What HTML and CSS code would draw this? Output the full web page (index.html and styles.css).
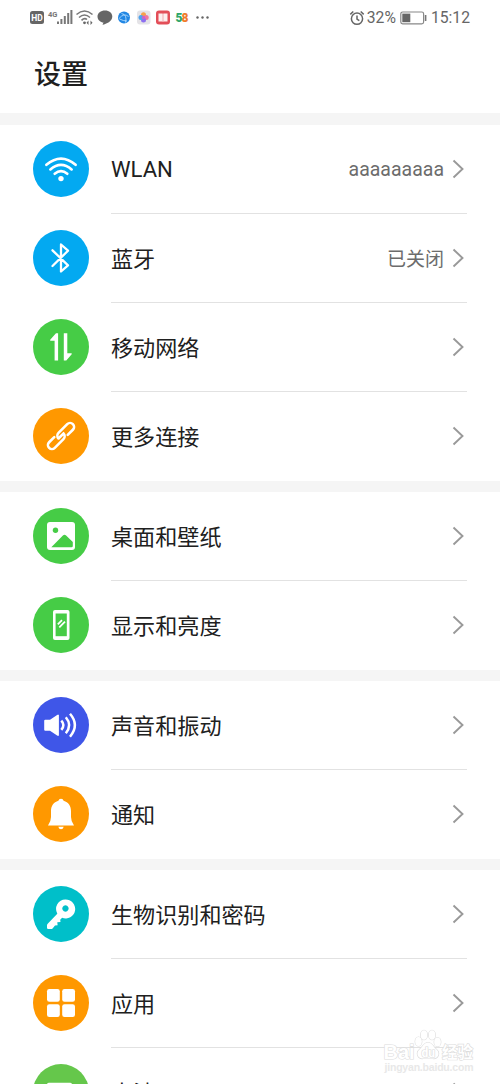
FILE: index.html
```html
<!DOCTYPE html>
<html lang="zh-CN">
<head>
  <meta charset="UTF-8" />
  <meta name="viewport" content="width=device-width, initial-scale=1.0" />
  <title>设置</title>
  <link rel="stylesheet" href="styles.css">
</head>
<body>

  <!-- Shared chevron -->
  <svg class="defs">
    <symbol id="chevron" viewBox="0 0 12 20">
      <path d="M1.500 1.500 L10.500 10 L1.500 18.500" fill="none" stroke="#999" stroke-width="1.900" />
    </symbol>
  </svg>

  <div class="screen">

    <!-- Status bar -->
    <div class="statusbar">
      <svg class="status-icons" viewBox="0 0 190 24" width="190" height="24">
        <rect x="2" y="5" width="14" height="13" rx="2.500" fill="#666" />
        <text x="9" y="15" class="hd">HD</text>
        <text x="20" y="10.500" class="net">4G</text>
        <g fill="#777">
          <rect x="29" y="15.500" width="2" height="2.500" />
          <rect x="32.400" y="13" width="2" height="5" />
          <rect x="35.800" y="10" width="2" height="8" />
          <rect x="39.200" y="7" width="2" height="11" />
          <rect x="42.400" y="4" width="2" height="14" />
        </g>
        <g fill="none" stroke="#777" stroke-width="1.600">
          <path d="M48.500 8.500 Q56.500 1.500 64.500 8.500" />
          <path d="M51 11.500 Q56.500 6.500 62 11.500" />
          <path d="M53.500 14.300 Q56.500 11.500 59 13.500" />
        </g>
        <circle cx="56.500" cy="16.800" r="1.400" fill="#666" />
        <path d="M60.500 14.500 l-2 2.200 2 2.200z M62.500 14.500 l2 2.200 -2 2.200z" fill="#666" />
        <path d="M77 4.500 c-4.300 0-7.500 2.600-7.500 6 0 3.600 3.200 6 6 6 l-1 2.200 c4-.5 9.800-3.500 9.800-8.200 0-3.400-3-6-7.300-6z" fill="#666" />
        <circle cx="96" cy="11.500" r="6" fill="#2187e4" />
        <path d="M91 12.500 q5-6 9.500-2 M93.500 7.500 q6 1 4 9 M91.500 13 q4 2 7.500 2" fill="none" stroke="#bfe2ff" stroke-width=".8" />
        <rect x="109" y="4.500" width="13.500" height="14" rx="3" fill="#e4e3e7" />
        <circle cx="115.500" cy="8.800" r="2.500" fill="#f5a04b" />
        <circle cx="118.200" cy="11.500" r="2.500" fill="#ef77a0" />
        <circle cx="115.500" cy="14" r="2.500" fill="#8d6ff0" />
        <circle cx="113" cy="11.500" r="2.500" fill="#4fa3ec" />
        <circle cx="115.500" cy="11.500" r="1.700" fill="#c862cd" />
        <rect x="128" y="4.500" width="14" height="14" rx="3" fill="#e34e58" />
        <path d="M130.500 7.500 h4 l.5 .6 .5-.6 h4 v8 h-4 l-.5 .6 -.5-.6 h-4z" fill="#fdeeee" />
        <path d="M135 8 V16" stroke="#ee9a9f" stroke-width=".8" />
        <text x="147.500" y="15.800" class="five">5</text>
        <text x="153.500" y="15.800" class="eight">8</text>
        <circle cx="169.500" cy="11.500" r="1.200" fill="#666" />
        <circle cx="174.500" cy="11.500" r="1.200" fill="#666" />
        <circle cx="179.500" cy="11.500" r="1.200" fill="#666" />
      </svg>
      <div class="status-right">
        <svg class="alarm" viewBox="0 0 16 16" width="16" height="16" fill="none" stroke="#666" stroke-width="1.500">
          <circle cx="8" cy="8.700" r="5.600" />
          <path d="M8 5.500 V9 L10.300 10.600 M1.300 4.400 L4.300 1.500 M14.700 4.400 L11.700 1.500" />
        </svg>
        <span class="battery-text">32%</span>
        <svg class="battery" viewBox="0 0 27 14" width="27" height="14">
          <rect x=".8" y="1" width="22.800" height="11.800" rx="1.800" fill="none" stroke="#888" stroke-width="1.200" />
          <rect x="2.300" y="2.600" width="8" height="8.600" fill="#666" />
          <rect x="24.800" y="4" width="1.600" height="6" fill="#777" />
        </svg>
        <span class="clock">15:12</span>
      </div>
    </div>

    <h1 class="title">设置</h1>

    <!-- Connections -->
    <div class="group">
      <div class="row">
        <svg class="icon blue" viewBox="0 0 56 56" fill="none" stroke="#fff" stroke-width="2.700" stroke-linecap="round">
          <path d="M13.400 23.800 Q28 11.300 42.600 23.800" />
          <path d="M17.400 28.400 Q28 19.300 38.600 28.400" />
          <path d="M21.700 32.700 Q28 27.500 34.300 32.700" />
          <circle cx="28" cy="37.600" r="2.700" fill="#fff" stroke="none" />
        </svg>
        <div class="content">
          <span class="label latin">WLAN</span>
          <span class="value latin">aaaaaaaaa</span>
          <svg class="chevron"><use href="#chevron" /></svg>
        </div>
      </div>
      <div class="row">
        <svg class="icon blue" viewBox="0 0 56 56" fill="none" stroke="#fff" stroke-width="2.300" stroke-linecap="round" stroke-linejoin="round">
          <path d="M19.500 20.300 L35 35.300 L28 41.500 V14.500 L35 20.700 L19.500 36" />
        </svg>
        <div class="content">
          <span class="label">蓝牙</span>
          <span class="value">已关闭</span>
          <svg class="chevron"><use href="#chevron" /></svg>
        </div>
      </div>
      <div class="row">
        <svg class="icon green" viewBox="0 0 56 56" fill="#fff">
          <path d="M21.600 41.500 V21.800 H17.200 V20.800 L23 14.300 H25.100 V41.500z" />
          <path d="M30.800 14.300 H34.300 V34.300 H38.700 V35.300 L33.300 41.500 H30.800z" />
        </svg>
        <div class="content">
          <span class="label">移动网络</span>
          <svg class="chevron"><use href="#chevron" /></svg>
        </div>
      </div>
      <div class="row">
        <svg class="icon orange" viewBox="0 0 56 56" fill="none" stroke="#fff" stroke-width="2.600" stroke-linecap="round">
          <g transform="rotate(-45 28 28)">
            <path d="M22.500 24 H15.200 a4 4 0 0 0 0 8 H27.500 a4 4 0 0 0 4-4 H25.500" />
            <path d="M33.500 32 H40.800 a4 4 0 0 0 0-8 H28.500 a4 4 0 0 0 -4 4" />
          </g>
        </svg>
        <div class="content">
          <span class="label">更多连接</span>
          <svg class="chevron"><use href="#chevron" /></svg>
        </div>
      </div>
    </div>

    <!-- Display -->
    <div class="group">
      <div class="row">
        <svg class="icon green" viewBox="0 0 56 56">
          <rect x="14" y="14" width="28" height="28" rx="3" fill="#fff" />
          <circle cx="22.500" cy="22.300" r="2.700" fill="#46cc46" />
          <path d="M18.300 39.300 L29.900 27.600 Q31.500 26 33.100 27.600 L39.800 34 V38 Q39.800 39.300 38.500 39.300z" fill="#46cc46" />
        </svg>
        <div class="content">
          <span class="label">桌面和壁纸</span>
          <svg class="chevron"><use href="#chevron" /></svg>
        </div>
      </div>
      <div class="row">
        <svg class="icon green" viewBox="0 0 56 56">
          <rect x="20" y="13" width="16.500" height="30" rx="2" fill="#fff" />
          <rect x="22.600" y="16.500" width="11.200" height="22.700" fill="#46cc46" />
          <path d="M24.800 27.300 L29 23.100 M26.300 30.300 L32 24.600" stroke="#fff" stroke-width="1.800" />
        </svg>
        <div class="content">
          <span class="label">显示和亮度</span>
          <svg class="chevron"><use href="#chevron" /></svg>
        </div>
      </div>
    </div>

    <!-- Sound -->
    <div class="group">
      <div class="row">
        <svg class="icon indigo" viewBox="0 0 56 56" fill="none" stroke="#fff" stroke-width="2.500">
          <path d="M12.300 22.800 H17 L24.500 17.700 H25.900 V38.700 H24.500 L17 33.700 H12.300 Q11.200 33.700 11.200 32.700 V23.800 Q11.200 22.800 12.300 22.800z" fill="#fff" stroke="none" />
          <path d="M28.300 23.700 Q32.500 28.200 28.300 32.800" />
          <path d="M32.800 20.300 Q39.500 28.200 32.800 36.200" />
          <path d="M37 16.800 Q46.800 28.200 37 39.700" />
        </svg>
        <div class="content">
          <span class="label">声音和振动</span>
          <svg class="chevron"><use href="#chevron" /></svg>
        </div>
      </div>
      <div class="row">
        <svg class="icon orange" viewBox="0 0 56 56" fill="#fff">
          <path d="M28 12.700 a2.600 2.600 0 0 1 2.600 2.100 C35.500 16.200 38 20 38 25 V31 Q38 35.500 41 39.500 H15 Q18 35.500 18 31 V25 C18 20 20.500 16.200 25.400 14.800 A2.600 2.600 0 0 1 28 12.700z" />
          <path d="M25.300 40.700 H30.700 Q30 43.200 28 43.200 T25.300 40.700z" />
        </svg>
        <div class="content">
          <span class="label">通知</span>
          <svg class="chevron"><use href="#chevron" /></svg>
        </div>
      </div>
    </div>

    <!-- Security and apps -->
    <div class="group">
      <div class="row">
        <svg class="icon teal" viewBox="0 0 56 56" fill="#fff">
          <path fill-rule="evenodd" d="M32.300 13.500 a9.500 9.500 0 1 1 -3.200 18.300 L27.200 33.700 L27.500 36 L24.300 36.300 L24.600 39.300 L22 39.500 L19.600 42.400 Q19 43 18 43 H15.200 Q14 43 14 41.800 V39.500 Q14 38.500 14.700 37.800 L24.300 27.700 A9.500 9.500 0 0 1 32.300 13.500z M32.400 19.300 a3.200 3.200 0 1 0 .1 0z" />
        </svg>
        <div class="content">
          <span class="label">生物识别和密码</span>
          <svg class="chevron"><use href="#chevron" /></svg>
        </div>
      </div>
      <div class="row">
        <svg class="icon orange" viewBox="0 0 56 56" fill="#fff">
          <rect x="14" y="14" width="12.800" height="12.800" rx="2.300" />
          <rect x="29.200" y="14" width="12.800" height="12.800" rx="2.300" />
          <rect x="14" y="29.200" width="12.800" height="12.800" rx="2.300" />
          <rect x="29.200" y="29.200" width="12.800" height="12.800" rx="2.300" />
        </svg>
        <div class="content">
          <span class="label">应用</span>
          <svg class="chevron"><use href="#chevron" /></svg>
        </div>
      </div>
      <div class="row">
        <svg class="icon leaf" viewBox="0 0 56 56" fill="#fff">
          <rect x="14" y="18.700" width="25" height="18.600" rx="2" />
          <rect x="40" y="24" width="2.500" height="8" rx="1" />
        </svg>
        <div class="content">
          <span class="label">电池</span>
          <svg class="chevron"><use href="#chevron" /></svg>
        </div>
      </div>
    </div>

    <!-- Watermark over the list -->
    <svg class="watermark" viewBox="0 0 100 50" width="100" height="50">
      <g class="wm-outline">
        <text x="2.500" y="31.500" class="wm-brand">Bai</text>
        <ellipse cx="37.500" cy="14.500" rx="3.300" ry="4.500" />
        <ellipse cx="43" cy="8" rx="3.300" ry="4.700" />
        <ellipse cx="51" cy="8" rx="3.300" ry="4.700" />
        <ellipse cx="56.500" cy="15" rx="3.300" ry="4.500" />
        <path d="M47 15.500 c-4 0-5 4-8 6.500 -5 4-2 10 3 9.500 h10 c5 .5 8-5.500 3-9.500 -3-2.500-4-6.500-8-6.500z" />
        <text x="40.500" y="29.500" class="wm-du">du</text>
        <text x="61" y="31" class="wm-cn">经验</text>
      </g>
      <text x="3.500" y="43.500" class="wm-url" textLength="89">jingyan.baidu.com</text>
    </svg>

  </div>

</body>
</html>
```
FILE: styles.css
```css
body {
  font-family: Roboto, "Noto Sans CJK SC", sans-serif;
  background-color: #fff;
  margin: 0;
  padding: 0;
}

.defs {
  display: none;
}

.screen {
  position: relative;
  width: 500px;
  height: 1084px;
  overflow: hidden;
}

/* Status bar */
.statusbar {
  display: flex;
  justify-content: space-between;
  align-items: center;
  height: 34px;
  padding: 0 30px 0 28px;
  color: #666;
}

.status-icons {
  margin-top: 2px;
}

.hd {
  font-size: 8.5px;
  font-weight: bold;
  fill: #fff;
  text-anchor: middle;
}

.net {
  font-size: 7.5px;
  font-weight: bold;
  fill: #777;
}

.five,
.eight {
  font-size: 12px;
  font-weight: 900;
}

.five {
  fill: #2fa66a;
}

.eight {
  fill: #ef7b2d;
}

.status-right {
  display: flex;
  align-items: center;
  font-size: 15.7px;
  line-height: 20px;
  padding-top: 2px;
}

.battery-text {
  margin-left: 2px;
}

.battery {
  margin: 0 4px 0 4px;
}

.title {
  height: 79px;
  margin: 0;
  padding-left: 34px;
  box-sizing: border-box;
  font-size: 27px;
  font-weight: 500;
  line-height: 83px;
  color: #1f1f1f;
}

/* Setting groups */
.group {
  border-top: 11px solid #f5f5f5;
}

.title + .group {
  border-top-width: 12px;
}

.row {
  display: flex;
  height: 89px;
  padding: 0 33px;
}

.icon {
  width: 56px;
  height: 56px;
  flex: none;
  margin: 16px 22px 0 0;
  border-radius: 50%;
}

.blue {
  background-color: #03a9f1;
}

.green {
  background-color: #46cc46;
}

.orange {
  background-color: #ff9800;
}

.indigo {
  background-color: #3f56e8;
}

.teal {
  background-color: #00bfc9;
}

.leaf {
  background-color: #65c74b;
}

.content {
  display: flex;
  flex: 1;
  align-items: center;
  border-bottom: 1px solid #e2e2e2;
}

.row:last-child .content {
  border-bottom-color: transparent;
}

.label {
  flex: 1;
  padding-bottom: 2px;
  font-size: 22.1px;
  color: #202020;
}

.value {
  margin-right: 8px;
  padding-bottom: 1px;
  font-size: 19px;
  color: #6c6c6c;
}

.latin {
  padding-bottom: 0;
}

.value.latin {
  font-size: 19.5px;
}

.chevron {
  width: 12px;
  height: 20px;
  margin-right: 3px;
}

/* Watermark */
.watermark {
  position: absolute;
  left: 381px;
  top: 1027px;
}

.wm-outline {
  fill: #fff;
  stroke: #dcdcdc;
  stroke-width: 1.2px;
  paint-order: stroke;
}

.wm-brand {
  font-family: "Liberation Sans", sans-serif;
  font-size: 20px;
  font-weight: bold;
}

.wm-du {
  font-size: 12px;
  font-weight: bold;
}

.wm-cn {
  font-size: 15.5px;
  font-weight: bold;
}

.wm-url {
  font-family: "Liberation Sans", sans-serif;
  font-size: 10.5px;
  font-weight: bold;
  fill: #e8e8e8;
}
```
